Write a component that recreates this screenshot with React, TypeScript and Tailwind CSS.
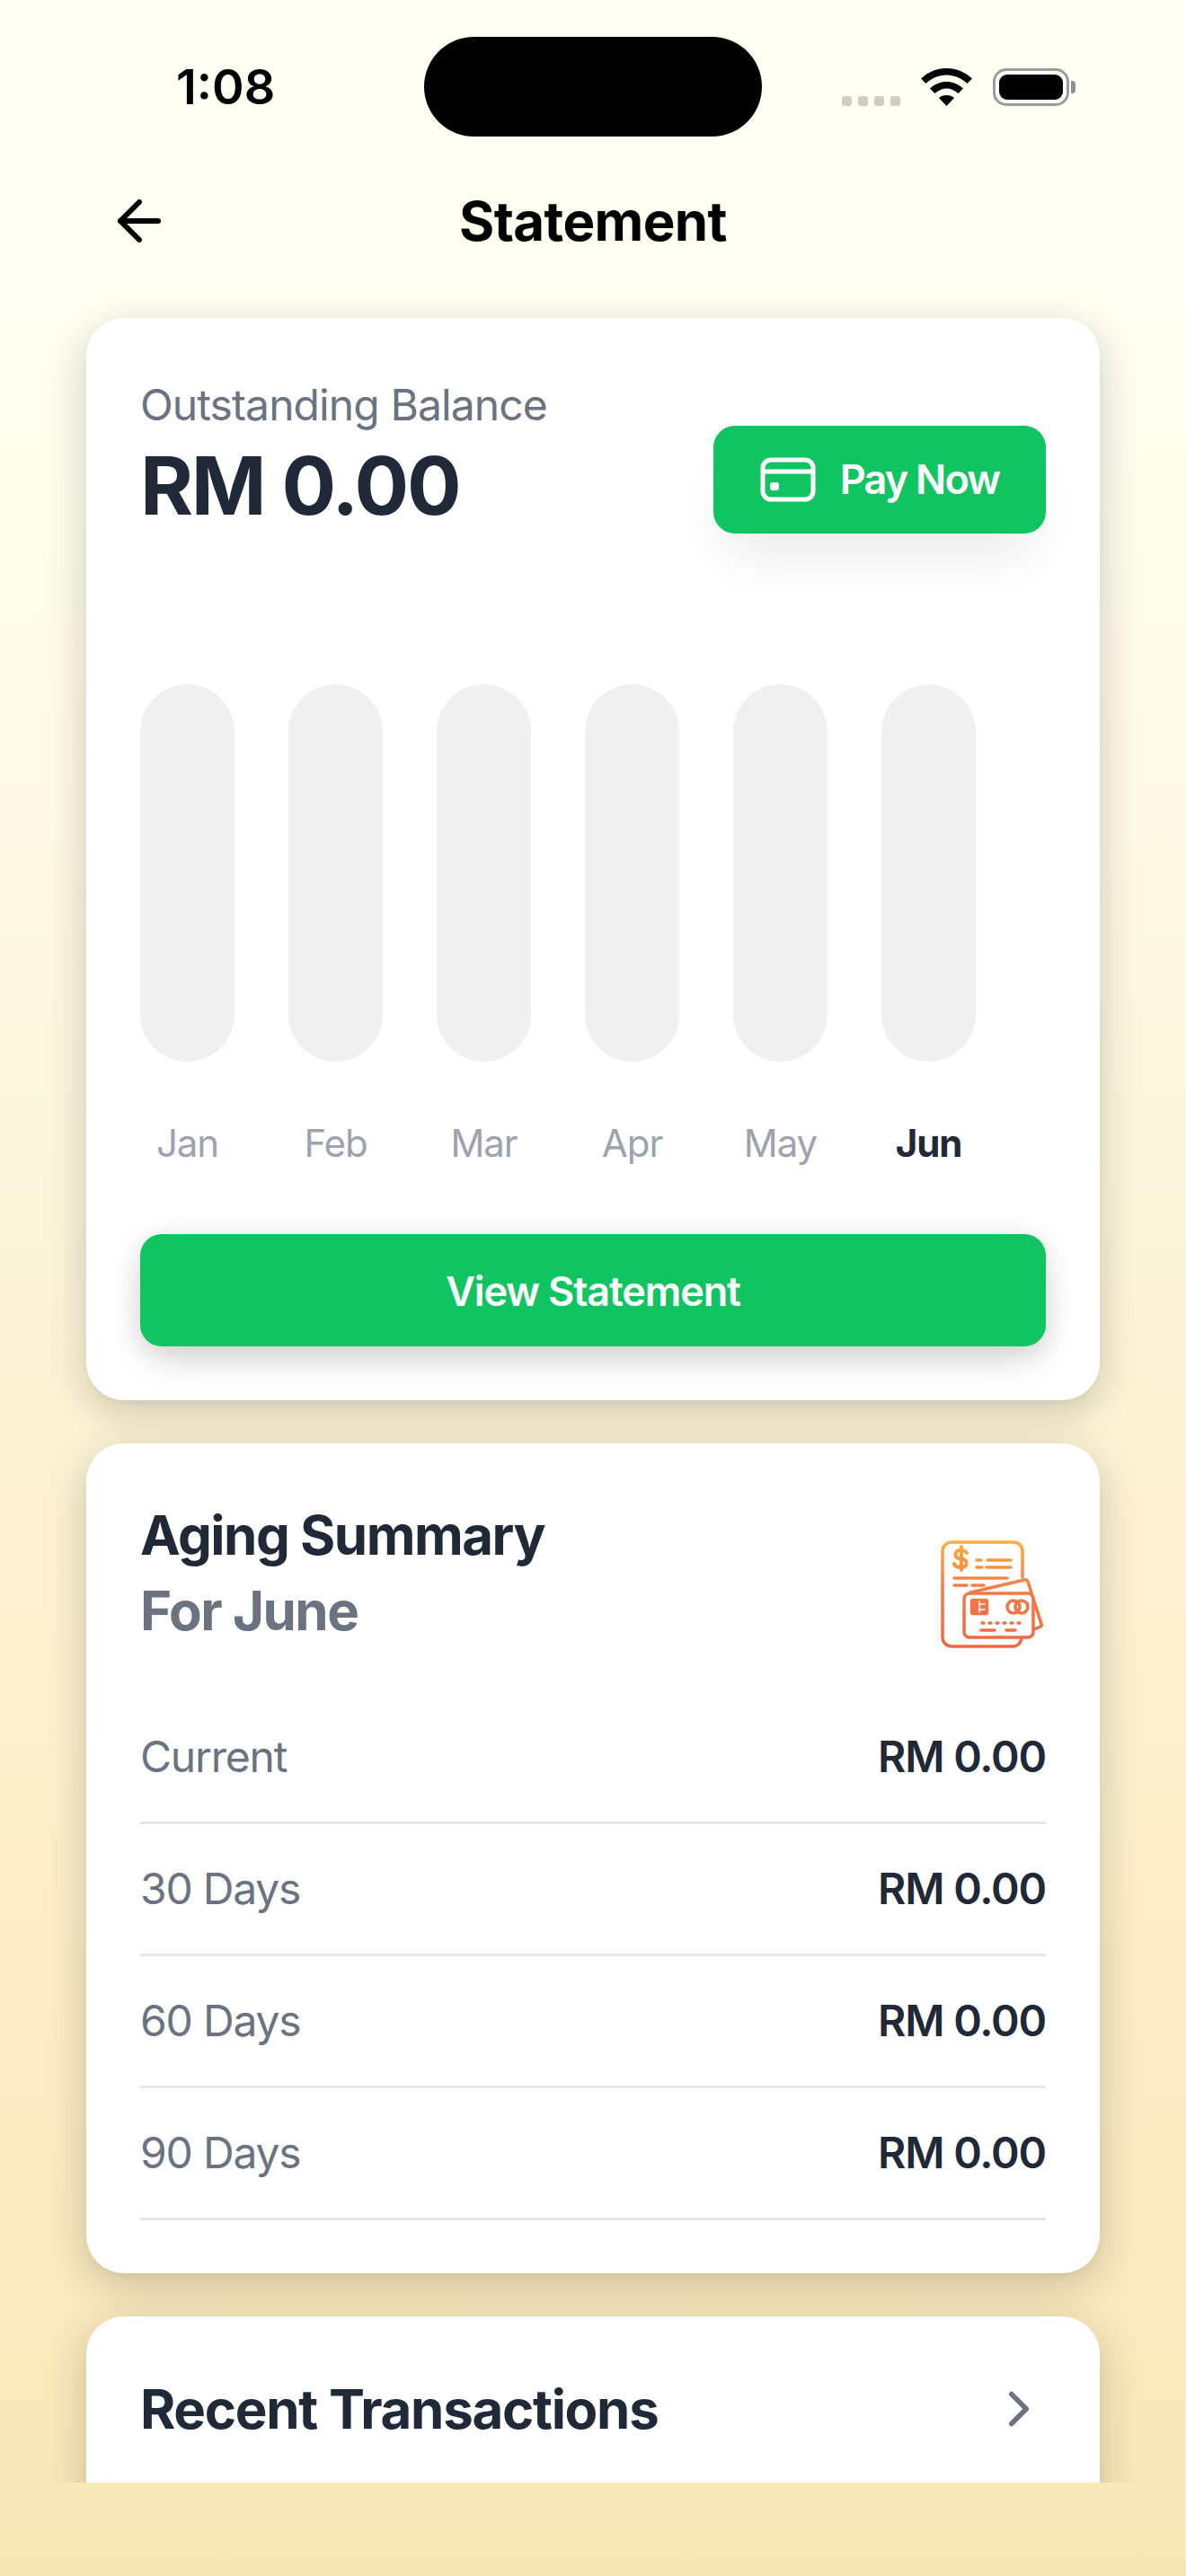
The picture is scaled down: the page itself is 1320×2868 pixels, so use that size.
import { ArrowLeft, ChevronRight } from 'lucide-react'

const months = ['Jan', 'Feb', 'Mar', 'Apr', 'May', 'Jun']
const aging = ['Current', '30 Days', '60 Days', '90 Days']

const cardClass =
  'bg-white rounded-[42px] shadow-[0_12px_48px_0_rgba(0,0,0,0.2),0_6px_12px_-6px_rgba(0,0,0,0.05)]'

function Wifi() {
  return (
    <svg width="57" height="42" viewBox="0 0 57 42" fill="#000">
      <path d="M28.500 0C17.500 0 7.900 4.200 0 11.500L5.500 17C12 11 20 7.500 28.500 7.500C37 7.500 45 11 51.500 17L57 11.500C49.100 4.200 39.500 0 28.500 0Z" />
      <path d="M28.500 15C21.500 15 15.500 17.500 10 22.500L15.500 28C19.500 24.500 24 22.500 28.500 22.500C33 22.500 37.500 24.500 41.500 28L47 22.500C41.500 17.500 35.500 15 28.500 15Z" />
      <path d="M28.500 30C25 30 22 31 20 33L28.500 42L37 33C35 31 32 30 28.500 30Z" />
    </svg>
  )
}

function Battery() {
  return (
    <div className="flex items-center gap-[2px]">
      <div className="w-[85px] h-[42px] rounded-[15px] border-[3px] border-[#9a9ca5] p-[4px]">
        <div className="w-full h-full rounded-[9px] bg-black" />
      </div>
      <div className="w-[5px] h-[14px] rounded-r-[4px] bg-[#8e909a]" />
    </div>
  )
}

function StatementIcon() {
  return (
    <svg width="160" height="160" viewBox="0 0 160 160" fill="none" strokeWidth="3.500" strokeLinecap="round" strokeLinejoin="round">
      <defs>
        <linearGradient id="bill" gradientUnits="userSpaceOnUse" x1="80" y1="25" x2="80" y2="144">
          <stop offset="0" stopColor="#fbb03b" />
          <stop offset="0.45" stopColor="#f47b48" />
          <stop offset="1" stopColor="#f1673f" />
        </linearGradient>
      </defs>
      <g stroke="url(#bill)">
        <path d="M118 66V37a10 10 0 0 0-10-10H39a10 10 0 0 0-10 10V133a10 10 0 0 0 10 10H108a10 10 0 0 0 9-9" />
        <path d="M60 83L120 69a3 3 0 0 1 4 2L139 118a2 2 0 0 1-1 3L131 124" />
        <rect x="53" y="84" width="77" height="49" rx="6" />
        <rect x="62" y="92" width="16" height="14" rx="1" strokeWidth="4.500" fill="#f1734a" />
        <path d="M70 93v12M70 96h6M70 102h6" stroke="#fff" strokeWidth="1.500" />
        <circle cx="108" cy="99" r="7" />
        <circle cx="117" cy="99" r="7" />
        <path d="M56 39a7 5 0 0 0-7-3c-6 0-8 7-2 9l5 1c6 2 5 9-3 9-4 0-6-1-7-4M50 32v26" strokeWidth="4" />
        <path d="M67 47h5M79 47h26M67 55h6M78 55h27M42 67h59M42 75h14M62 75h13M73 117h2M81 117h2M89 117h2M97 117h2M105 117h2M113 117h2M72 125h15M100 125h10" />
      </g>
    </svg>
  )
}

export default function App() {
  return (
    <div className="relative h-[2868px] overflow-hidden bg-gradient-to-b from-[#fffff2] from-[12%] to-[#fae7b6] font-['Inter',sans-serif]">
      <div className="h-[2764px] overflow-hidden">
        {/* Status bar */}
        <div className="flex items-start pt-[41px] h-[152px]">
          <div className="w-[472px] h-[111px] flex items-center pl-[196px]">
            <span className="text-[54px] leading-none font-semibold text-black">1:08</span>
          </div>
          <div className="w-[376px] h-[111px] rounded-[56px] bg-black" />
          <div className="flex items-center h-[111px] pl-[89px]">
            <div className="flex gap-[7px] mt-[31px] mr-[23px]">
              <div className="w-[11px] h-[11px] rounded-[3px] bg-[#cdcdc1]" />
              <div className="w-[11px] h-[11px] rounded-[3px] bg-[#cdcdc1]" />
              <div className="w-[11px] h-[11px] rounded-[3px] bg-[#cdcdc1]" />
              <div className="w-[11px] h-[11px] rounded-[3px] bg-[#cdcdc1]" />
            </div>
            <Wifi />
            <div className="ml-[23px]">
              <Battery />
            </div>
          </div>
        </div>

        {/* Header */}
        <div className="grid grid-cols-[1fr_auto_1fr] items-center h-[188px] px-[119px]">
          <ArrowLeft size={72} color="#000" strokeWidth={2} />
          <h1 className="text-[60px] font-bold text-black leading-none tracking-[-0.6px]">Statement</h1>
          <div />
        </div>

        <div className="flex flex-col gap-[48px] px-[96px] mt-[14px]">
          {/* Balance card */}
          <div className={`${cardClass} p-[60px]`}>
            <div className="flex justify-between items-start">
              <div className="mt-[1px]">
                <p className="text-[48px] leading-[72px] tracking-[-0.9px] text-[#6b7280]">Outstanding Balance</p>
                <p className="text-[90px] leading-[100px] font-bold tracking-tight text-[#1f2937] mt-[4px]">RM 0.00</p>
              </div>
              <button className="mt-[60px] w-[370px] h-[120px] rounded-[24px] bg-[#10c561] text-white flex items-center justify-center gap-[27px] shadow-[0_36px_60px_-12px_rgba(0,0,0,0.08)]">
                <svg width="62" height="50" viewBox="0 0 62 50" fill="none" stroke="#fff" strokeWidth="5">
                  <rect x="3" y="3" width="56" height="44" rx="9" />
                  <path d="M3 16h56" />
                  <rect x="11" y="28" width="10" height="9" rx="3" fill="#fff" stroke="none" />
                </svg>
                <span className="text-[45px] font-semibold tracking-[-1.8px]">Pay Now</span>
              </button>
            </div>

            {/* Monthly bars */}
            <div className="flex gap-[60px] mt-[168px]">
              {months.map((m) => (
                <div key={m} className="w-[105px] flex flex-col items-center">
                  <div className="w-[105px] h-[420px] rounded-full bg-[#f0f0f0]" />
                  <span
                    className={`mt-[66px] text-[42px] leading-[50px] tracking-tight whitespace-nowrap ${
                      m === 'Jun' ? 'font-bold text-[#1f2937]' : 'text-[#9ca3af]'
                    }`}
                  >
                    {m}
                  </span>
                </div>
              ))}
            </div>

            <button className="mt-[76px] w-full h-[125px] pt-[2px] rounded-[24px] bg-[#10c561] text-white text-[45px] font-semibold tracking-tight shadow-[0_6px_30px_0_rgba(20,30,50,0.15),0_24px_45px_-9px_rgba(0,0,0,0.1)]">
              View Statement
            </button>
          </div>

          {/* Aging summary */}
          <div className={`${cardClass} px-[60px] pt-[60px] pb-[59px]`}>
            <div className="flex justify-between items-start">
              <div>
                <h2 className="text-[60px] leading-[84px] font-bold tracking-tight text-[#1f2937]">Aging Summary</h2>
                <p className="text-[60px] leading-[84px] font-bold tracking-tight text-[#6b7280]">For June</p>
              </div>
              <div className="-mr-[16px] mt-[23px]">
                <StatementIcon />
              </div>
            </div>
            <div className="mt-[34px]">
              {aging.map((label) => (
                <div key={label} className="flex justify-between items-center h-[147px] border-b-[3px] border-[#e5e7eb]">
                  <span className="text-[48px] tracking-tight text-[#6b7280]">{label}</span>
                  <span className="text-[48px] font-semibold tracking-tight text-[#1f2937]">RM 0.00</span>
                </div>
              ))}
            </div>
          </div>

          {/* Recent transactions */}
          <div className={`${cardClass} p-[60px] h-[300px]`}>
            <div className="flex justify-between items-center mt-[3px]">
              <h2 className="text-[60px] leading-[80px] font-bold tracking-[-1.3px] text-[#1f2937]">Recent Transactions</h2>
              <ChevronRight size={66} color="#6b7280" strokeWidth={2} className="mr-[-3px]" />
            </div>
          </div>
        </div>
      </div>
    </div>
  )
}
